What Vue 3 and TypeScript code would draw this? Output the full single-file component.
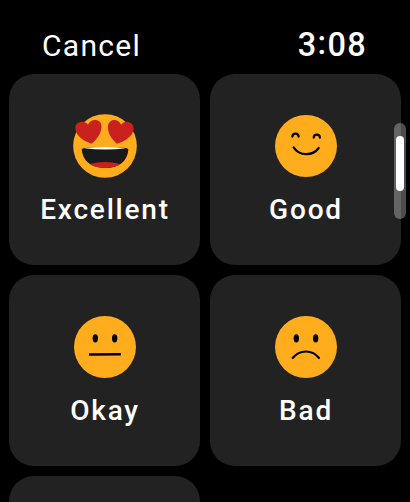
<script setup lang="ts">
type Mood = 'excellent' | 'good' | 'okay' | 'bad'

interface Option {
  id: Mood
  label: string
  viewBox: string
}

const options: Option[] = [
  { id: 'excellent', label: 'Excellent', viewBox: '-3 0 273 273' },
  { id: 'good', label: 'Good', viewBox: '-6 0 273 273' },
  { id: 'okay', label: 'Okay', viewBox: '-3 -3 273 273' },
  { id: 'bad', label: 'Bad', viewBox: '-6 -3 273 273' },
]
</script>

<template>
  <main class="watch">
    <header class="bar">
      <span class="cancel">Cancel</span>
      <span class="time">3<span class="colon">:</span>08</span>
    </header>
    <section class="grid">
      <button v-for="o in options" :key="o.id" class="card" type="button">
        <svg class="face" :viewBox="o.viewBox" aria-hidden="true">
          <g v-if="o.id === 'excellent'">
            <circle cx="135" cy="138" r="95.5" fill="#ffad1c" />
            <path d="M65 148Q66 145 75 144Q135 138 196 144Q206 145 205 150C202 184 177 204 136 204C94 204 68 184 65 148Z" fill="#1a1a1a" />
            <path d="M72 145Q135 137 198 145Q135 152 72 145Z" fill="#fff" />
            <path d="M90 192Q134 180 181 192C156 207 115 208 90 192Z" fill="#c9211e" />
            <path d="M95 131C70 123 47 108 46 84C45 66 72 58 84 74C90 55 121 55 124 75C127 96 111 119 95 131Z" fill="#c9211e" />
            <path d="M171 131C155 118 142 98 144 77C147 55 176 54 183 74C193 58 220 65 221 84C221 109 194 124 171 131Z" fill="#c9211e" />
          </g>
          <g v-else-if="o.id === 'good'" fill="none" stroke="#000" stroke-width="6.5" stroke-linecap="round">
            <circle cx="132" cy="138" r="93" fill="#ffad1c" stroke="none" />
            <path d="M91 110C92 98 109 98 110 110" />
            <path d="M155 113C156 101 173 101 174 113" />
            <path d="M95 142C112 169 152 169 170 144" />
          </g>
          <g v-else-if="o.id === 'okay'">
            <circle cx="135" cy="135" r="93" fill="#ffad1c" />
            <ellipse cx="106" cy="109" rx="8" ry="12.5" />
            <ellipse cx="164" cy="109" rx="8" ry="12.5" />
            <path d="M87 157.500L183 156.500" stroke="#000" stroke-width="7.500" />
          </g>
          <g v-else>
            <circle cx="132" cy="135" r="93" fill="#ffad1c" />
            <ellipse cx="103" cy="109" rx="8" ry="12.5" />
            <ellipse cx="161" cy="109" rx="8" ry="12.5" />
            <path d="M92 168C113 142 151 142 171 168" fill="none" stroke="#000" stroke-width="6.5" stroke-linecap="round" />
          </g>
        </svg>
        <span class="label">{{ o.label }}</span>
      </button>
      <div class="card"></div>
    </section>
    <div class="track"><div class="thumb"></div></div>
  </main>
</template>

<style>
body {
  background: #000;
}
</style>

<style scoped>
.watch {
  position: relative;
  box-sizing: border-box;
  width: 410px;
  height: 502px;
  overflow: hidden;
  background: #000;
  color: #fff;
  font-family: Roboto, "Liberation Sans", sans-serif;
}
.bar {
  display: flex;
  justify-content: space-between;
  box-sizing: border-box;
  height: 74px;
  padding: 25px 43px 0 42px;
  line-height: 40px;
}
.cancel {
  padding-top: 1px;
  font-size: 30px;
  letter-spacing: 1.3px;
}
.time {
  font-size: 32.5px;
  font-weight: 500;
  letter-spacing: 1.3px;
}
.colon {
  line-height: 0;
  vertical-align: 2.5px;
}
.grid {
  display: grid;
  grid-template-columns: 191px 191px;
  grid-auto-rows: 191px;
  gap: 10px;
  padding-left: 9px;
}
.card {
  display: flex;
  flex-direction: column;
  align-items: center;
  box-sizing: border-box;
  margin: 0;
  padding: 26px 0 0;
  border: 0;
  border-radius: 25px;
  background: #222;
  color: inherit;
  font: inherit;
}
.face {
  display: block;
  flex: none;
  width: 91px;
  height: 91px;
  margin-bottom: 1px;
}
.label {
  padding-left: 1px;
  font-size: 28px;
  font-weight: 500;
  line-height: 36px;
  letter-spacing: 1.8px;
  white-space: nowrap;
}
.track {
  position: absolute;
  top: 123px;
  left: 394px;
  box-sizing: border-box;
  width: 12px;
  height: 96px;
  padding: 13px 2px 0;
  border-radius: 6px;
  background: rgba(255, 255, 255, 0.3);
}
.thumb {
  width: 8px;
  height: 55px;
  border-radius: 4px;
  background: #fff;
}
</style>
